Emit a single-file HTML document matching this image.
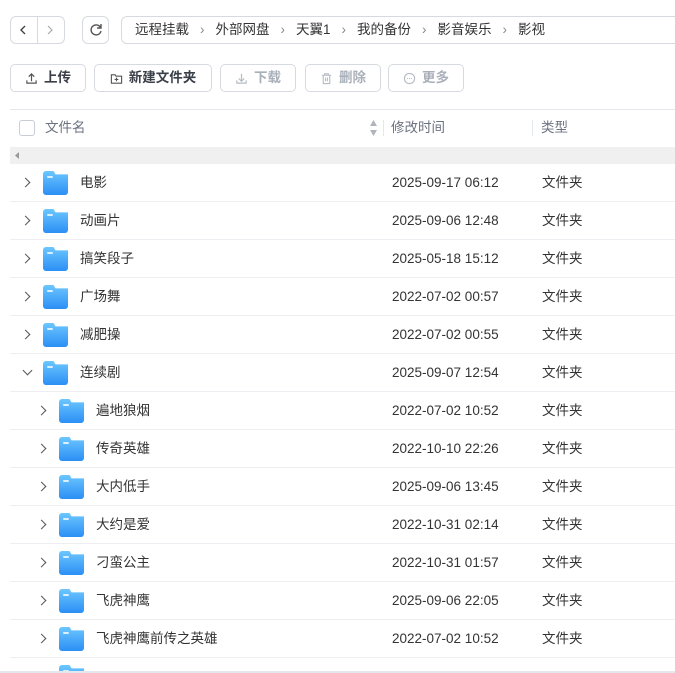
<!DOCTYPE html><html><head><meta charset="utf-8"><style>
*{box-sizing:border-box;margin:0;padding:0}
body{width:675px;height:673px;overflow:hidden;background:#fff;font-family:"Liberation Sans","Noto Sans CJK SC",sans-serif;color:#333;position:relative;font-size:13px;line-height:16px}
.a{position:absolute;line-height:16px}
.bx{position:absolute;border:1px solid #d6dae0;border-radius:6px;background:#fff}
.btn{position:absolute;top:64px;height:28px;border:1px solid #d6dae0;border-radius:5px;font-size:13.5px;font-weight:bold;display:flex;align-items:center;justify-content:center;gap:6px;color:#3a3f48;line-height:16px}
.btn svg{width:13px;height:13px}
.dis{color:#a9b0ba}
.row{position:absolute;left:10px;width:665px;height:38px;border-bottom:1px solid #eceef1}
.row span{position:absolute;top:11px;font-size:13.5px;line-height:16px}
.fd{position:absolute;top:7px;width:25px;height:24px;border-radius:3px;background:linear-gradient(#6cc6ff,#2b8ff5);clip-path:polygon(0 0,42% 0,50% 14%,100% 14%,100% 100%,0 100%)}
.fd:after{content:"";position:absolute;left:4px;top:5px;width:6px;height:2px;background:#d9f0ff;border-radius:1px}
.ch{position:absolute;top:15px;width:7px;height:7px;border-right:1.5px solid #555;border-bottom:1.5px solid #555;transform:rotate(-45deg)}
.ch.d{transform:rotate(45deg);top:13px}
.sep{color:#888;margin:0 11px}
</style></head><body>
<div class="bx" style="left:10px;top:16px;width:55px;height:28px"></div>
<div class="a" style="left:37px;top:17px;width:1px;height:26px;background:#d6dae0"></div>
<svg class="a" style="left:19px;top:25px" width="8" height="10"><path d="M6 1L2 5l4 4" fill="none" stroke="#444" stroke-width="1.4"/></svg>
<svg class="a" style="left:46px;top:25px" width="8" height="10"><path d="M2 1l4 4-4 4" fill="none" stroke="#aaa" stroke-width="1.2"/></svg>
<div class="bx" style="left:82px;top:16px;width:27px;height:28px"></div>
<svg class="a" style="left:88px;top:22px" width="16" height="16"><path d="M12.5 5.5A5 5 0 1 0 13 9" fill="none" stroke="#555" stroke-width="1.4"/><path d="M13 2v4h-4" fill="none" stroke="#555" stroke-width="1.4"/></svg>
<div class="bx" style="left:121px;top:16px;width:570px;height:28px"></div>
<div class="a" style="left:135px;top:22px;font-size:13.5px;color:#333;white-space:nowrap">远程挂载<span class="sep">›</span>外部网盘<span class="sep">›</span>天翼1<span class="sep">›</span>我的备份<span class="sep">›</span>影音娱乐<span class="sep">›</span>影视</div>
<div class="btn" style="left:10px;width:76px"><svg viewBox="0 0 14 14"><path d="M7 10V2M4 5l3-3 3 3M2 9v3h10V9" fill="none" stroke="#555" stroke-width="1.3"/></svg>上传</div>
<div class="btn" style="left:94px;width:118px"><svg viewBox="0 0 14 14"><path d="M1.5 3h4l1 1.5h6v7.5h-11z M7 6v4M5 8h4" fill="none" stroke="#555" stroke-width="1.2"/></svg>新建文件夹</div>
<div class="btn dis" style="left:220px;width:76px"><svg viewBox="0 0 14 14"><path d="M7 2v8M4 7l3 3 3-3M2 9v3h10V9" fill="none" stroke="#b5bbc4" stroke-width="1.3"/></svg>下载</div>
<div class="btn dis" style="left:305px;width:76px"><svg viewBox="0 0 14 14"><path d="M2 3.5h10M5 3.5V2h4v1.5M3.5 3.5v9h7v-9M6 6v4M8 6v4" fill="none" stroke="#b5bbc4" stroke-width="1.2"/></svg>删除</div>
<div class="btn dis" style="left:388px;width:76px"><svg viewBox="0 0 14 14"><circle cx="7" cy="7" r="5.5" fill="none" stroke="#b5bbc4" stroke-width="1.2"/><path d="M4.5 7h1M6.5 7h1M8.5 7h1" stroke="#b5bbc4"/></svg>更多</div>
<div class="a" style="left:10px;top:109px;width:665px;height:1px;background:#e4e7eb"></div>
<div class="a" style="left:19px;top:120px;width:16px;height:16px;border:1px solid #c8cdd4;border-radius:3px"></div>
<div class="a" style="left:45px;top:120px;color:#6b7280;font-size:13.5px">文件名</div>
<svg class="a" style="left:369px;top:119px" width="9" height="18"><path d="M4.5 1L8 7H1z" fill="#b0b5bd"/><path d="M4.5 17L8 11H1z" fill="#b0b5bd"/></svg>
<div class="a" style="left:383px;top:120px;width:1px;height:16px;background:#e4e7eb"></div>
<div class="a" style="left:391px;top:120px;color:#6b7280;font-size:13.5px">修改时间</div>
<div class="a" style="left:532px;top:120px;width:1px;height:16px;background:#e4e7eb"></div>
<div class="a" style="left:541px;top:120px;color:#6b7280;font-size:13.5px">类型</div>
<div class="a" style="left:10px;top:147px;width:665px;height:17px;background:#f0f0f0"></div>
<svg class="a" style="left:15px;top:152px" width="5" height="7"><path d="M4 0v7L0 3.5z" fill="#999"/></svg>
<div class="row" style="top:164px"><div class="ch" style="left:12px"></div><div class="fd" style="left:33px"></div><span style="left:70px">电影</span><span style="left:382px">2025-09-17 06:12</span><span style="left:532px">文件夹</span></div>
<div class="row" style="top:202px"><div class="ch" style="left:12px"></div><div class="fd" style="left:33px"></div><span style="left:70px">动画片</span><span style="left:382px">2025-09-06 12:48</span><span style="left:532px">文件夹</span></div>
<div class="row" style="top:240px"><div class="ch" style="left:12px"></div><div class="fd" style="left:33px"></div><span style="left:70px">搞笑段子</span><span style="left:382px">2025-05-18 15:12</span><span style="left:532px">文件夹</span></div>
<div class="row" style="top:278px"><div class="ch" style="left:12px"></div><div class="fd" style="left:33px"></div><span style="left:70px">广场舞</span><span style="left:382px">2022-07-02 00:57</span><span style="left:532px">文件夹</span></div>
<div class="row" style="top:316px"><div class="ch" style="left:12px"></div><div class="fd" style="left:33px"></div><span style="left:70px">减肥操</span><span style="left:382px">2022-07-02 00:55</span><span style="left:532px">文件夹</span></div>
<div class="row" style="top:354px"><div class="ch d" style="left:14px"></div><div class="fd" style="left:33px"></div><span style="left:70px">连续剧</span><span style="left:382px">2025-09-07 12:54</span><span style="left:532px">文件夹</span></div>
<div class="row" style="top:392px"><div class="ch" style="left:28px"></div><div class="fd" style="left:49px"></div><span style="left:86px">遍地狼烟</span><span style="left:382px">2022-07-02 10:52</span><span style="left:532px">文件夹</span></div>
<div class="row" style="top:430px"><div class="ch" style="left:28px"></div><div class="fd" style="left:49px"></div><span style="left:86px">传奇英雄</span><span style="left:382px">2022-10-10 22:26</span><span style="left:532px">文件夹</span></div>
<div class="row" style="top:468px"><div class="ch" style="left:28px"></div><div class="fd" style="left:49px"></div><span style="left:86px">大内低手</span><span style="left:382px">2025-09-06 13:45</span><span style="left:532px">文件夹</span></div>
<div class="row" style="top:506px"><div class="ch" style="left:28px"></div><div class="fd" style="left:49px"></div><span style="left:86px">大约是爱</span><span style="left:382px">2022-10-31 02:14</span><span style="left:532px">文件夹</span></div>
<div class="row" style="top:544px"><div class="ch" style="left:28px"></div><div class="fd" style="left:49px"></div><span style="left:86px">刁蛮公主</span><span style="left:382px">2022-10-31 01:57</span><span style="left:532px">文件夹</span></div>
<div class="row" style="top:582px"><div class="ch" style="left:28px"></div><div class="fd" style="left:49px"></div><span style="left:86px">飞虎神鹰</span><span style="left:382px">2025-09-06 22:05</span><span style="left:532px">文件夹</span></div>
<div class="row" style="top:620px"><div class="ch" style="left:28px"></div><div class="fd" style="left:49px"></div><span style="left:86px">飞虎神鹰前传之英雄</span><span style="left:382px">2022-07-02 10:52</span><span style="left:532px">文件夹</span></div>
<div class="row" style="top:658px;height:13px;overflow:hidden;border:none"><div class="fd" style="left:49px"></div></div>
<div class="a" style="left:0;top:671px;width:675px;height:2px;background:#e4e7eb"></div>
</body></html>
